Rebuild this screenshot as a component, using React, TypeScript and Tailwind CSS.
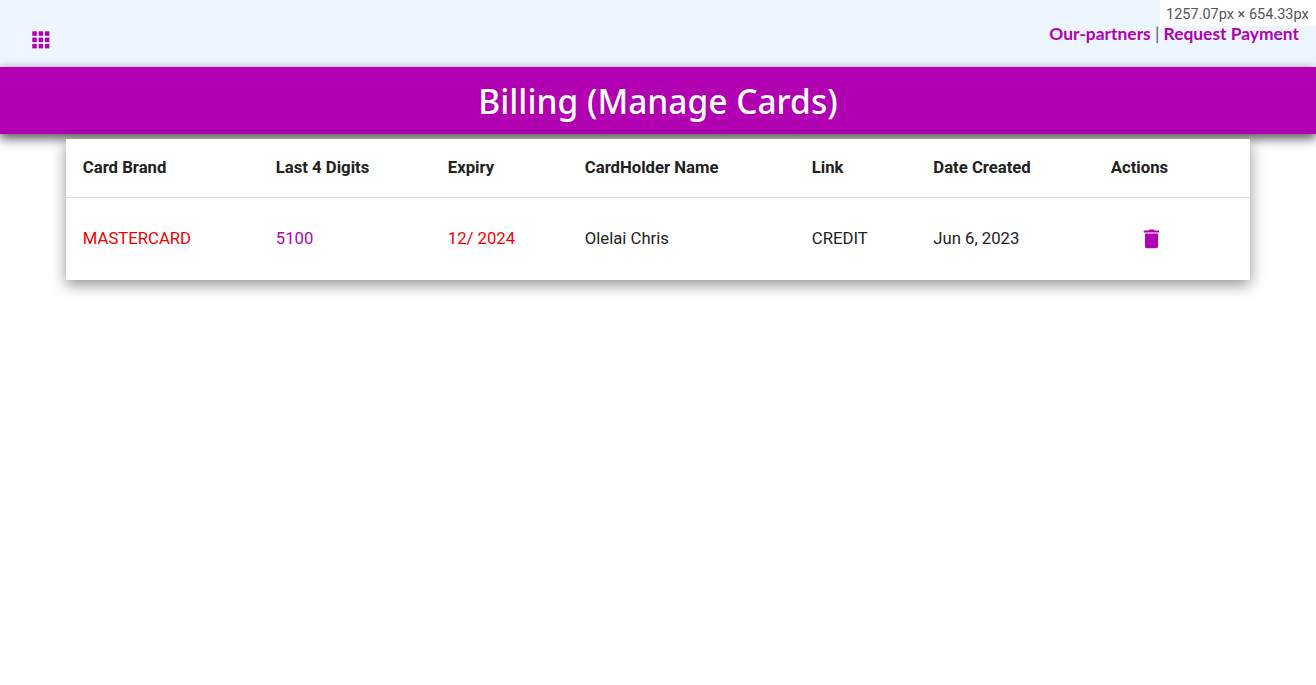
import React from "react";

function GridIcon() {
  const pos = [3.300, 9.600, 15.900];
  return (
    <svg width="24" height="24" viewBox="0 0 24 24" fill="#b100b1">
      {pos.map((y) => pos.map((x) => <rect key={`${x}-${y}`} x={x} y={y} width="4.500" height="4.500" />))}
    </svg>
  );
}

function TrashIcon() {
  return (
    <svg width="24" height="24" viewBox="0 0 24 24" fill="#b100b1">
      <path d="M5 19.500c0 1 .8 1.700 1.700 1.700h9.600c.9 0 1.700-.7 1.700-1.700V6.500H5v13zM19 3.500h-4.200l-1-1H9.200l-1 1H3.700v2H19v-2z" />
    </svg>
  );
}

const cols = [
  "w-[193px]",
  "w-[172px]",
  "w-[137px]",
  "w-[227px]",
  "w-[121.500px]",
  "w-[177.500px]",
  "flex-1",
];

export default function App() {
  const headers = ["Card Brand", "Last 4 Digits", "Expiry", "CardHolder Name", "Link", "Date Created", "Actions"];
  return (
    <div className="relative min-h-[685px] bg-white font-['Roboto',sans-serif]">
      <div className="relative h-[67px] overflow-hidden bg-[#edf5ff]">
        <div className="absolute left-[17px] top-[17px] h-[48px] w-[48px] rounded-full bg-[#eff6ff]" />
        <div className="relative pl-[29px] pt-[28px]"><GridIcon /></div>
        <div className="absolute right-0 top-0 h-[26px] w-[156px] bg-white pl-[6px] text-[14.500px] leading-[29px] whitespace-nowrap text-[#555]">1257.07px × 654.33px</div>
        <div className="absolute right-[17px] top-[22px] whitespace-nowrap text-[17.400px] leading-[23px] font-['Lato',sans-serif] font-bold text-[#b100b1]">
          Our-partners <span className="font-normal text-[#555]">|</span> Request Payment
        </div>
      </div>
      <div className="relative z-10 flex h-[67px] items-center justify-center bg-[#b100b1] shadow-[0_5px_10px_rgba(0,0,0,0.6),0_0_8px_rgba(0,0,0,0.15)]">
        <h1 className="pt-[2px] font-['Noto_Sans',sans-serif] text-[33.500px] font-medium text-white">Billing (Manage Cards)</h1>
      </div>
      <div className="relative z-20 mx-[66px] mt-[5px] w-[1184px] bg-white shadow-[0_5px_14px_rgba(0,0,0,0.42)]">
        <div className="flex h-[59px] items-center border-b border-[#e0e0e0] pl-[16.800px] text-[16.700px] font-bold text-[#212121]">
          {headers.map((h, i) => <div key={h} className={cols[i]}>{h}</div>)}
        </div>
        <div className="flex h-[82px] items-center pl-[16.800px] text-[16.700px] text-[#212121]">
          <div className={cols[0] + " text-[#f00000]"}>MASTERCARD</div>
          <div className={cols[1] + " text-[#b100b1]"}>5100</div>
          <div className={cols[2] + " text-[#f00000]"}>12/ 2024</div>
          <div className={cols[3]}>Olelai Chris</div>
          <div className={cols[4]}>CREDIT</div>
          <div className={cols[5]}>Jun 6, 2023</div>
          <div className="flex-1 pl-[29px]"><TrashIcon /></div>
        </div>
      </div>
    </div>
  );
}
